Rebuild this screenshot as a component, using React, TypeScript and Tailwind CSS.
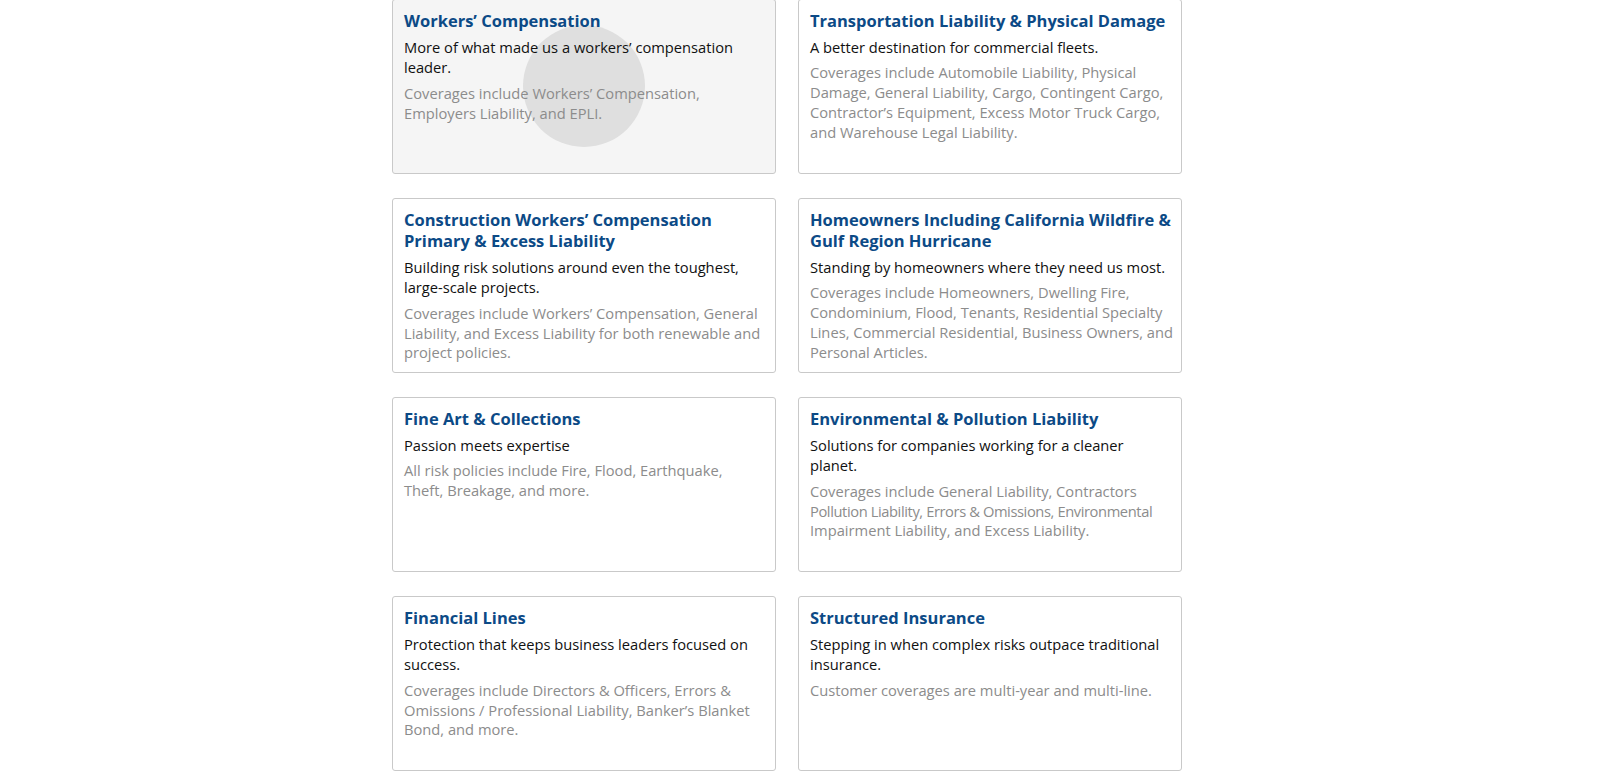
import React from 'react';

type Line = {
  title: string[];
  tagline: string;
  coverage: React.ReactNode;
};

const lines: Line[] = [
  {
    title: ['Workers’ Compensation'],
    tagline: 'More of what made us a workers’ compensation leader.',
    coverage: 'Coverages include Workers’ Compensation, Employers Liability, and EPLI.',
  },
  {
    title: ['Transportation Liability & Physical Damage'],
    tagline: 'A better destination for commercial fleets.',
    coverage:
      'Coverages include Automobile Liability, Physical Damage, General Liability, Cargo, Contingent Cargo, Contractor’s Equipment, Excess Motor Truck Cargo, and Warehouse Legal Liability.',
  },
  {
    title: ['Construction Workers’ Compensation', 'Primary & Excess Liability'],
    tagline: 'Building risk solutions around even the toughest, large-scale projects.',
    coverage:
      'Coverages include Workers’ Compensation, General Liability, and Excess Liability for both renewable and project policies.',
  },
  {
    title: ['Homeowners Including California Wildfire &', 'Gulf Region Hurricane'],
    tagline: 'Standing by homeowners where they need us most.',
    coverage:
      'Coverages include Homeowners, Dwelling Fire, Condominium, Flood, Tenants, Residential Specialty Lines, Commercial Residential, Business Owners, and Personal Articles.',
  },
  {
    title: ['Fine Art & Collections'],
    tagline: 'Passion meets expertise',
    coverage: (
      <>
        All risk policies include Fire, Flood, Earthquake,
        <br />
        Theft, Breakage, and more.
      </>
    ),
  },
  {
    title: ['Environmental & Pollution Liability'],
    tagline: 'Solutions for companies working for a cleaner planet.',
    coverage: (
      <>
        Coverages include General Liability, Contractors
        <br />
        <span className="whitespace-nowrap tracking-[-0.4px]">
          Pollution Liability, Errors &amp; Omissions, Environmental
        </span>
        <br />
        Impairment Liability, and Excess Liability.
      </>
    ),
  },
  {
    title: ['Financial Lines'],
    tagline: 'Protection that keeps business leaders focused on success.',
    coverage:
      'Coverages include Directors & Officers, Errors & Omissions / Professional Liability, Banker’s Blanket Bond, and more.',
  },
  {
    title: ['Structured Insurance'],
    tagline: 'Stepping in when complex risks outpace traditional insurance.',
    coverage: 'Customer coverages are multi-year and multi-line.',
  },
];

function Card({ line, active }: { line: Line; active?: boolean }) {
  return (
    <div
      className={`relative h-[175px] overflow-hidden rounded-[3px] border border-[#c9c9c9] pl-[11px] pr-[8px] pt-[10px] ${
        active ? 'bg-[#f5f5f5]' : 'bg-white'
      }`}
    >
      {active && (
        <span className="pointer-events-none absolute left-[130px] top-[25px] h-[122px] w-[122px] rounded-full bg-[#dfdfdf]" />
      )}
      <div className="relative">
        <h3 className="text-[16.5px] font-bold leading-[21px] text-[#0c4a86]">
          {line.title.map((t) => (
            <span key={t} className="block whitespace-nowrap">
              {t}
            </span>
          ))}
        </h3>
        <p className="mt-[5.5px] text-[14.7px] leading-[20.4px] text-[#111111]">{line.tagline}</p>
        <p className="mt-[6.5px] text-[14.7px] leading-[19.8px] text-[#8c8c8c]">{line.coverage}</p>
      </div>
    </div>
  );
}

export default function App() {
  return (
    <div className="min-h-screen bg-white font-['Open_Sans',sans-serif]">
      <div className="-mt-px ml-[392px] grid w-[790px] grid-cols-2 gap-x-[22px] gap-y-[24px]">
        {lines.map((line, i) => (
          <Card key={i} line={line} active={i === 0} />
        ))}
      </div>
    </div>
  );
}
